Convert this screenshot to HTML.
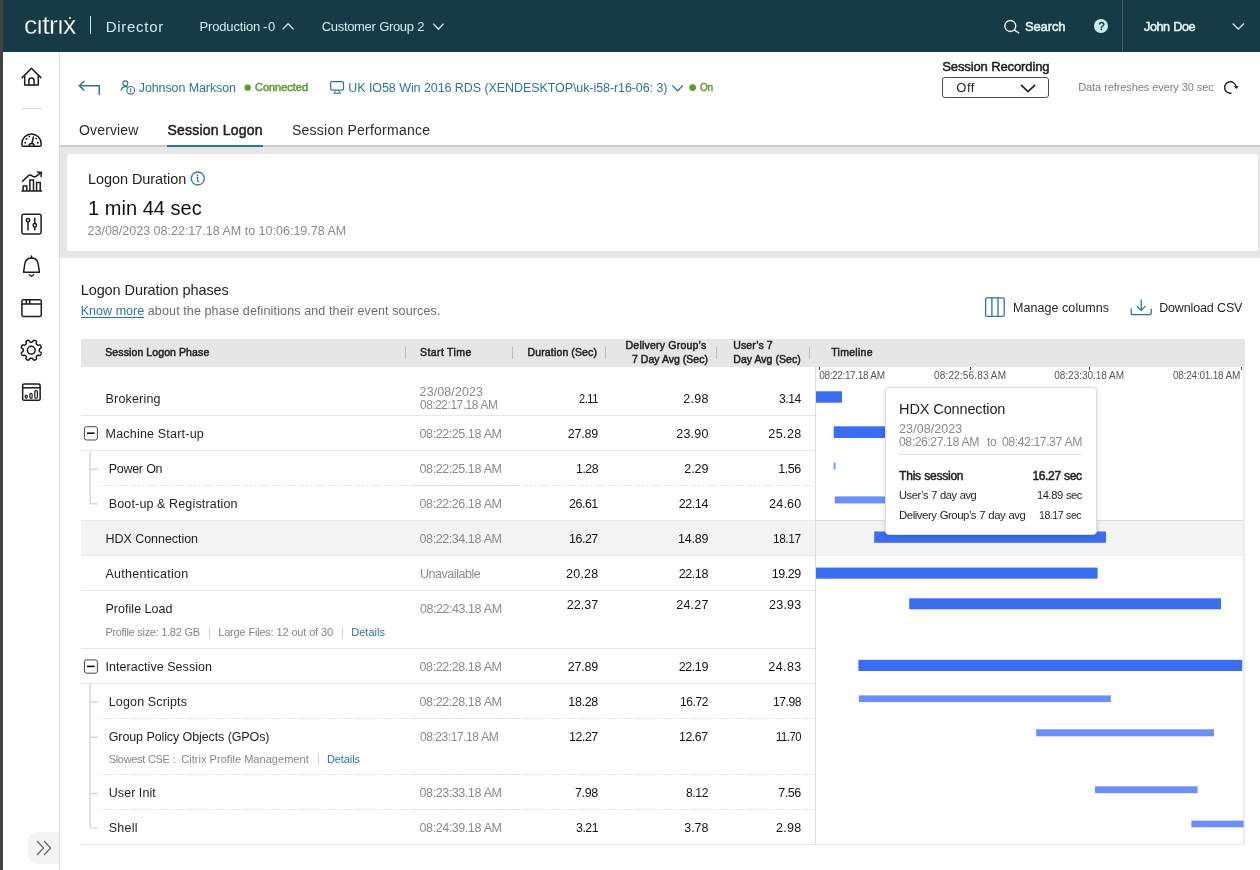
<!DOCTYPE html>
<html lang="en">
<head>
<meta charset="utf-8">
<title>Citrix Director - Session Logon</title>
<style>
html,body{margin:0;padding:0}
body{width:1260px;height:870px;position:relative;overflow:hidden;background:#fff;
 font-family:"Liberation Sans",sans-serif;color:#1f1f1f;-webkit-font-smoothing:antialiased}
.t{position:absolute;white-space:pre;line-height:1;display:block;transform-origin:0 0}
.a{position:absolute;display:block}
.b{position:absolute;display:block}
svg{position:absolute;overflow:visible}
#page{position:absolute;left:0;top:0;width:1260px;height:870px;overflow:hidden;will-change:transform}
#strip{left:0;top:0;width:3px;height:870px;background:#424242}
#hdr{left:3px;top:0;width:1257px;height:52px;background:#173a47}
#side{left:3px;top:52px;width:56px;height:818px;background:#fff;border-right:1px solid #dadada}
#band{left:60px;top:145px;width:1200px;height:113px;background:#e7e7e7;border-top:2px solid #cbcbcb;box-sizing:border-box}
#card{left:66.5px;top:153.7px;width:1191.5px;height:97.3px;background:#fff;border-radius:3px}
.hl{position:absolute;height:1px;background:#e7e7e7;left:80.5px;width:735px}
.dl{position:absolute;height:1px;left:97.9px;width:717.5px;background:repeating-linear-gradient(90deg,#dcdcdc 0,#dcdcdc 1.4px,transparent 1.4px,transparent 2.8px)}
.vs{position:absolute;width:1px;height:11.5px;top:347px;background:#b9b9b9}
.tk{position:absolute;width:1px;height:3.4px;top:366.8px;background:#444}
.tr{position:absolute;background:#d6d6d6}
.cb{position:absolute;left:83.9px;width:14px;height:14.3px;box-sizing:border-box;border:1px solid #444;border-radius:2.5px;background:#fff}
.cb:after{content:"";position:absolute;left:2.1px;width:7.6px;top:5.3px;height:1.3px;background:#111}
.sp{position:absolute;width:1px;height:10.5px;background:#d4d4d4}
#tip{left:885px;top:387px;width:211.5px;height:148px;background:#fff;border:1px solid #dedede;border-radius:4px;box-sizing:border-box;box-shadow:0 1px 4px rgba(0,0,0,.16)}
</style>
</head>
<body>
<div id="page">
<div id="strip" class="a"></div>

<!-- ===== top bar ===== -->
<header id="hdr" class="a"></header>
<i class="a" style="left:69.2px;top:16.6px;width:2.3px;height:2.3px;border-radius:50%;background:#fff;z-index:2"></i>
<i class="a" style="left:90px;top:16.2px;width:1px;height:17.8px;background:#bfe3e8"></i>
<svg style="left:281px;top:20.5px" width="14" height="10" viewBox="0 0 14 10"><path d="M1.6 8.4 L7.1 2.8 L12.6 8.4" fill="none" stroke="#d3eff1" stroke-width="1.3"/></svg>
<svg style="left:431px;top:21px" width="14" height="10" viewBox="0 0 14 10"><path d="M2.2 2.6 L7.4 8.2 L12.6 2.6" fill="none" stroke="#d3eff1" stroke-width="1.3"/></svg>
<svg style="left:1003px;top:19px" width="18" height="16" viewBox="0 0 18 16"><circle cx="7.3" cy="7" r="5.5" fill="none" stroke="#fff" stroke-width="1.3"/><path d="M11.3 10.9 L16.2 14.3" stroke="#fff" stroke-width="1.3" fill="none"/></svg>
<i class="a" style="left:1094.2px;top:19.4px;width:13.8px;height:13.8px;border-radius:50%;background:#c9eef0"></i>
<i class="a" style="left:1122px;top:0;width:1px;height:52px;background:#45636d"></i>
<svg style="left:1231px;top:21px" width="14" height="10" viewBox="0 0 14 10"><path d="M1.7 2.5 L7.3 8.1 L12.9 2.5" fill="none" stroke="#d3eff1" stroke-width="1.3"/></svg>

<span class="t" style="left:23.90px;top:12px;font-size:26.5px;letter-spacing:-0.427px;color:#fff;-webkit-text-stroke:0.3px #173a47;">citrix</span>
<span class="t" style="left:105.70px;top:19px;font-size:15px;letter-spacing:0.729px;color:#cfecf0;">Director</span>
<span class="t" style="left:199.50px;top:20px;font-size:13px;letter-spacing:-0.158px;color:#cdecee;">Production</span>
<span class="t" style="left:263.00px;top:20px;font-size:13px;color:#cdecee;">-</span>
<span class="t" style="left:268.10px;top:20px;font-size:13px;color:#cdecee;">0</span>
<span class="t" style="left:321.75px;top:20px;font-size:13px;letter-spacing:-0.322px;word-spacing:0.322px;color:#cdecee;">Customer Group 2</span>
<span class="t" style="left:1025.00px;top:20px;font-size:13px;letter-spacing:-0.138px;-webkit-text-stroke:0.5px;color:#e3f5f6;">Search</span>
<span class="t" style="left:1143.75px;top:20px;font-size:13px;letter-spacing:-0.450px;word-spacing:0.450px;transform:scaleX(0.9731);-webkit-text-stroke:0.5px;color:#e3f5f6;">John Doe</span>
<span class="t" style="left:1098.60px;top:21px;font-size:11px;-webkit-text-stroke:0.5px;color:#173a47;">?</span>
<i class="a" style="left:37px;top:13px;width:5px;height:6px;background:#173a47"></i><i class="a" style="left:58px;top:13px;width:5px;height:6px;background:#173a47"></i>

<!-- ===== side nav ===== -->
<nav id="side" class="a"></nav>
<svg style="left:19px;top:64px" width="26" height="24" viewBox="0 0 26 24" fill="none" stroke="#1c1c1c" stroke-width="1.5" stroke-linejoin="round" stroke-linecap="round">
 <path d="M3.2 13.6 L12.5 4.3 L21.8 13.6"/><path d="M5.7 12 V21 H19.3 V12"/><path d="M9.9 21 V16.6 a2.6 2.6 0 0 1 5.2 0 V21"/></svg>
<i class="a" style="left:21px;top:108px;width:21px;height:1px;background:#dcdcdc"></i>
<svg style="left:19px;top:130px" width="26" height="20" viewBox="0 0 26 20" fill="none" stroke="#1c1c1c" stroke-width="1.5" stroke-linejoin="round" stroke-linecap="round">
 <path d="M2.9 15 V13.5 a9.6 9.6 0 0 1 19.2 0 V15 Q22.1 16.3 20.8 16.3 H4.2 Q2.9 16.3 2.9 15 Z"/><path d="M12.9 13.3 L14.4 7"/><path d="M10 16.1 a2.6 2.6 0 0 1 5.2 0" stroke-width="1.3"/>
 <g fill="#1c1c1c" stroke="none"><circle cx="6.3" cy="12.7" r=".95"/><circle cx="7.6" cy="9" r=".95"/><circle cx="10.3" cy="6.6" r=".95"/><circle cx="17.2" cy="8.6" r=".95"/><circle cx="18.8" cy="12.7" r=".95"/></g></svg>
<svg style="left:19px;top:168px" width="26" height="26" viewBox="0 0 26 26" fill="none" stroke="#1c1c1c" stroke-width="1.5" stroke-linejoin="miter" stroke-linecap="butt">
 <path d="M2.3 23 H23.2"/><path d="M4.2 23 V18 H7.8 V23"/><path d="M10.9 23 V12 H14.5 V23"/><path d="M17.6 23 V14.6 H21.2 V23"/>
 <path d="M3.6 13.3 L9.6 7.4 Q11.5 6.6 13.2 8 Q15 9.6 17 8.3 L22.2 4.6" stroke-linecap="round"/><path d="M18.3 3.9 L22.4 4.4 L22.1 8.6" stroke-linecap="round" stroke-linejoin="round"/></svg>
<svg style="left:19px;top:211px" width="26" height="26" viewBox="0 0 26 26" fill="none" stroke="#1c1c1c" stroke-width="1.5">
 <rect x="2.9" y="3.3" width="19.2" height="19.6" rx="1.6"/><circle cx="9" cy="9.3" r="1.7"/><path d="M9 11 V19.5"/><path d="M15.8 6.8 V12.6 M15.8 16 V19.5"/><circle cx="15.8" cy="14.3" r="1.7"/></svg>
<svg style="left:19px;top:253px" width="26" height="26" viewBox="0 0 26 26" fill="none" stroke="#1c1c1c" stroke-width="1.5" stroke-linejoin="round" stroke-linecap="round">
 <path d="M4.6 19.2 H20.4 L19.6 13.5 C19.4 8 17 5 12.5 5 C8 5 5.6 8 5.4 13.5 Z"/><path d="M12.5 3 V5"/><path d="M10.3 21.7 L12.5 23.4 L14.7 21.7" stroke-width="1.3"/></svg>
<svg style="left:19px;top:296px" width="26" height="24" viewBox="0 0 26 24" fill="none" stroke="#1c1c1c" stroke-width="1.5">
 <rect x="2.9" y="3.7" width="19.4" height="16.7" rx="1.6"/><path d="M2.9 8 H22.3"/><path d="M7.4 3.7 V8 M10.7 3.7 V8"/></svg>
<svg style="left:19px;top:338px" width="26" height="26" viewBox="0 0 26 26" fill="none" stroke="#1c1c1c" stroke-width="1.5" stroke-linejoin="round">
 <path d="M20.30 12.20 L20.30 12.41 L20.30 12.62 L20.30 12.83 L20.33 13.05 L20.41 13.27 L20.63 13.53 L21.05 13.83 L21.59 14.19 L21.99 14.54 L22.17 14.86 L22.20 15.15 L22.16 15.42 L22.09 15.68 L22.00 15.94 L21.90 16.20 L21.79 16.45 L21.67 16.69 L21.53 16.93 L21.37 17.15 L21.14 17.33 L20.79 17.43 L20.26 17.40 L19.63 17.27 L19.11 17.19 L18.78 17.21 L18.56 17.31 L18.39 17.45 L18.24 17.59 L18.09 17.74 L17.94 17.89 L17.79 18.04 L17.64 18.19 L17.50 18.34 L17.36 18.51 L17.26 18.73 L17.24 19.06 L17.32 19.58 L17.45 20.21 L17.48 20.74 L17.38 21.09 L17.20 21.32 L16.98 21.48 L16.74 21.62 L16.50 21.74 L16.25 21.85 L15.99 21.95 L15.73 22.04 L15.47 22.11 L15.20 22.15 L14.91 22.12 L14.59 21.94 L14.24 21.54 L13.88 21.00 L13.58 20.58 L13.32 20.36 L13.10 20.28 L12.88 20.25 L12.67 20.25 L12.46 20.25 L12.25 20.25 L12.04 20.25 L11.83 20.25 L11.62 20.25 L11.40 20.28 L11.18 20.36 L10.92 20.58 L10.62 21.00 L10.26 21.54 L9.91 21.94 L9.59 22.12 L9.30 22.15 L9.03 22.11 L8.77 22.04 L8.51 21.95 L8.25 21.85 L8.00 21.74 L7.76 21.62 L7.52 21.48 L7.30 21.32 L7.12 21.09 L7.02 20.74 L7.05 20.21 L7.18 19.58 L7.26 19.06 L7.24 18.73 L7.14 18.51 L7.00 18.34 L6.86 18.19 L6.71 18.04 L6.56 17.89 L6.41 17.74 L6.26 17.59 L6.11 17.45 L5.94 17.31 L5.72 17.21 L5.39 17.19 L4.87 17.27 L4.24 17.40 L3.71 17.43 L3.36 17.33 L3.13 17.15 L2.97 16.93 L2.83 16.69 L2.71 16.45 L2.60 16.20 L2.50 15.94 L2.41 15.68 L2.34 15.42 L2.30 15.15 L2.33 14.86 L2.51 14.54 L2.91 14.19 L3.45 13.83 L3.87 13.53 L4.09 13.27 L4.17 13.05 L4.20 12.83 L4.20 12.62 L4.20 12.41 L4.20 12.20 L4.20 11.99 L4.20 11.78 L4.20 11.57 L4.17 11.35 L4.09 11.13 L3.87 10.87 L3.45 10.57 L2.91 10.21 L2.51 9.86 L2.33 9.54 L2.30 9.25 L2.34 8.98 L2.41 8.72 L2.50 8.46 L2.60 8.20 L2.71 7.95 L2.83 7.71 L2.97 7.47 L3.13 7.25 L3.36 7.07 L3.71 6.97 L4.24 7.00 L4.87 7.13 L5.39 7.21 L5.72 7.19 L5.94 7.09 L6.11 6.95 L6.26 6.81 L6.41 6.66 L6.56 6.51 L6.71 6.36 L6.86 6.21 L7.00 6.06 L7.14 5.89 L7.24 5.67 L7.26 5.34 L7.18 4.82 L7.05 4.19 L7.02 3.66 L7.12 3.31 L7.30 3.08 L7.52 2.92 L7.76 2.78 L8.00 2.66 L8.25 2.55 L8.51 2.45 L8.77 2.36 L9.03 2.29 L9.30 2.25 L9.59 2.28 L9.91 2.46 L10.26 2.86 L10.62 3.40 L10.92 3.82 L11.18 4.04 L11.40 4.12 L11.62 4.15 L11.83 4.15 L12.04 4.15 L12.25 4.15 L12.46 4.15 L12.67 4.15 L12.88 4.15 L13.10 4.12 L13.32 4.04 L13.58 3.82 L13.88 3.40 L14.24 2.86 L14.59 2.46 L14.91 2.28 L15.20 2.25 L15.47 2.29 L15.73 2.36 L15.99 2.45 L16.25 2.55 L16.50 2.66 L16.74 2.78 L16.98 2.92 L17.20 3.08 L17.38 3.31 L17.48 3.66 L17.45 4.19 L17.32 4.82 L17.24 5.34 L17.26 5.67 L17.36 5.89 L17.50 6.06 L17.64 6.21 L17.79 6.36 L17.94 6.51 L18.09 6.66 L18.24 6.81 L18.39 6.95 L18.56 7.09 L18.78 7.19 L19.11 7.21 L19.63 7.13 L20.26 7.00 L20.79 6.97 L21.14 7.07 L21.37 7.25 L21.53 7.47 L21.67 7.71 L21.79 7.95 L21.90 8.20 L22.00 8.46 L22.09 8.72 L22.16 8.98 L22.20 9.25 L22.17 9.54 L21.99 9.86 L21.59 10.21 L21.05 10.57 L20.63 10.87 L20.41 11.13 L20.33 11.35 L20.30 11.57 L20.30 11.78 L20.30 11.99 Z"/><circle cx="12.25" cy="12.2" r="3.85"/></svg>
<svg style="left:19px;top:380px" width="26" height="24" viewBox="0 0 26 24" fill="none" stroke="#1c1c1c" stroke-width="1.5">
 <rect x="3.65" y="4.05" width="17.5" height="16.3" rx="1.6"/><path d="M3.65 7.8 H21.15"/>
 <rect x="6.2" y="15.4" width="2" height="2.7" rx=".8" stroke-width="1.2"/><rect x="10.9" y="13.3" width="2.2" height="4.8" rx=".9" stroke-width="1.2"/><rect x="15.8" y="10.6" width="2.6" height="7.5" rx="1.1" stroke-width="1.2"/></svg>
<i class="a" style="left:28px;top:832px;width:31px;height:32px;background:#f3f3f3;border-radius:9px 0 0 9px"></i>
<svg style="left:34px;top:838px" width="20" height="20" viewBox="0 0 20 20" fill="none" stroke="#666" stroke-width="1.2"><path d="M3 3 L9.6 10 L3 17"/><path d="M10 3 L16.6 10 L10 17"/></svg>

<!-- ===== session bar ===== -->
<svg style="left:77px;top:78px" width="26" height="20" viewBox="0 0 26 20" fill="none" stroke="#2e7690" stroke-width="1.5" stroke-linecap="round" stroke-linejoin="round">
 <path d="M2.4 7.7 H22.3 V16.6"/><path d="M6.9 3.3 L2.4 7.7 L6.9 12.1"/></svg>
<svg style="left:119px;top:79px" width="18" height="18" viewBox="0 0 18 18" fill="none" stroke="#2e7690" stroke-width="1.1">
 <circle cx="6.3" cy="4.4" r="2.5"/><path d="M2.1 11.6 C2.6 8.6 4.2 7.6 6.3 7.6 C7.3 7.6 8.2 7.9 8.9 8.5"/><circle cx="11.7" cy="11.3" r="3.8"/><path d="M11.7 9.2 V13.4" stroke-width="1"/></svg>
<svg style="left:240px;top:80px" width="16" height="16" viewBox="0 0 16 16"><circle cx="7.65" cy="7.65" r="3.2" fill="#5b9e30"/></svg>
<svg style="left:329px;top:80px" width="18" height="16" viewBox="0 0 18 16" fill="none" stroke="#2e7690" stroke-width="1.2">
 <rect x="1.7" y="1.6" width="12.8" height="8.6" rx="1.2"/><path d="M4.3 13.2 H11.9" stroke-width="1.1"/><path d="M6.5 10.4 L5.4 13 M9.7 10.4 L10.8 13" stroke-width="1"/></svg>
<svg style="left:670px;top:82px" width="16" height="12" viewBox="0 0 16 12" fill="none" stroke="#2e7690" stroke-width="1.3"><path d="M2.2 3.4 L7.6 8.8 L13 3.4"/></svg>
<svg style="left:685px;top:80px" width="16" height="16" viewBox="0 0 16 16"><circle cx="7.65" cy="7.55" r="3.4" fill="#5b9e30"/></svg>
<i class="a" style="left:942px;top:77.4px;width:107px;height:20.2px;box-sizing:border-box;border:1px solid #4d4d4d;border-radius:3px;background:#fff"></i>
<svg style="left:1018px;top:82px" width="20" height="12" viewBox="0 0 20 12" fill="none" stroke="#1c1c1c" stroke-width="1.6"><path d="M3 2.9 L10.1 9.6 L17.2 2.9"/></svg>
<svg style="left:1221px;top:78px" width="22" height="20" viewBox="0 0 22 20" fill="none" stroke="#1c1c1c" stroke-width="1.4" stroke-linecap="round">
 <path d="M9.9 15.2 A5.7 5.7 0 1 1 14.9 8.3"/><path d="M12.9 8.2 L17.8 8.2 L15.4 10.9 Z" fill="#1c1c1c" stroke="none"/></svg>

<!-- ===== tabs / summary ===== -->
<div id="band" class="a"></div>
<i class="a" style="left:167px;top:144.8px;width:96.3px;height:2.2px;background:#2e7690"></i>
<div id="card" class="a"></div>
<svg style="left:189px;top:170px" width="18" height="18" viewBox="0 0 18 18" fill="none" stroke="#2e7690" stroke-width="1.3">
 <circle cx="8.8" cy="8.5" r="6.5"/><path d="M7.6 7.4 H8.7 V10.9 Q8.9 11.7 10.3 11.9" stroke-width="1.2"/><circle cx="8.6" cy="5.3" r=".85" fill="#2e7690" stroke="none"/></svg>
<i class="a" style="left:80.8px;top:317px;width:63.6px;height:1px;background:#2e7690"></i>
<svg style="left:983px;top:295px" width="24" height="24" viewBox="0 0 24 24" fill="none" stroke="#2e7690" stroke-width="1.3">
 <rect x="2.6" y="2.8" width="18.6" height="18.6" rx="1.5"/><path d="M8.9 2.8 V21.4 M15 2.8 V21.4"/></svg>
<svg style="left:1129px;top:297px" width="24" height="20" viewBox="0 0 24 20" fill="none" stroke="#2e7690" stroke-width="1.3" stroke-linecap="round" stroke-linejoin="round">
 <path d="M2.2 12.2 V15.4 Q2.2 17.6 4.4 17.6 H20 Q22.2 17.6 22.2 15.4 V12.2"/><path d="M12.2 3.2 V13.2"/><path d="M8.2 9.4 L12.2 13.4 L16.2 9.4"/></svg>

<span class="t" style="left:138.75px;top:82px;font-size:12.5px;letter-spacing:-0.111px;word-spacing:0.111px;color:#2e7690;">Johnson Markson</span>
<span class="t" style="left:255.00px;top:82px;font-size:11px;letter-spacing:-0.023px;-webkit-text-stroke:0.5px;color:#5b9e30;">Connected</span>
<span class="t" style="left:348.25px;top:82px;font-size:12.5px;letter-spacing:-0.083px;word-spacing:0.083px;color:#2e7690;">UK IO58 Win 2016 RDS (XENDESKTOP\uk-i58-r16-06: 3)</span>
<span class="t" style="left:700.25px;top:82px;font-size:11px;letter-spacing:-0.450px;transform:scaleX(0.9131);-webkit-text-stroke:0.5px;color:#5b9e30;">On</span>
<span class="t" style="left:942.30px;top:60px;font-size:13px;letter-spacing:-0.128px;word-spacing:0.128px;-webkit-text-stroke:0.5px;">Session Recording</span>
<span class="t" style="left:956.25px;top:81px;font-size:13px;letter-spacing:0.531px;">Off</span>
<span class="t" style="left:1078.25px;top:82px;font-size:11px;letter-spacing:-0.094px;word-spacing:0.094px;color:#7d7d7d;">Data refreshes every 30 sec</span>
<span class="t" style="left:79.00px;top:123px;font-size:14px;letter-spacing:0.152px;color:#2b2b2b;">Overview</span>
<span class="t" style="left:167.50px;top:123px;font-size:14px;letter-spacing:0.216px;word-spacing:-0.216px;-webkit-text-stroke:0.5px;">Session Logon</span>
<span class="t" style="left:292.00px;top:123px;font-size:14px;letter-spacing:0.246px;word-spacing:-0.246px;color:#2b2b2b;">Session Performance</span>
<span class="t" style="left:88.00px;top:172px;font-size:14.5px;letter-spacing:-0.078px;word-spacing:0.078px;">Logon Duration</span>
<span class="t" style="left:88.00px;top:198px;font-size:20px;letter-spacing:0.047px;word-spacing:-0.047px;color:#111;">1 min 44 sec</span>
<span class="t" style="left:87.50px;top:225px;font-size:12.5px;letter-spacing:0.005px;word-spacing:-0.005px;color:#8a8a8a;">23/08/2023 08:22:17.18 AM to 10:06:19.78 AM</span>
<span class="t" style="left:80.75px;top:283px;font-size:14.5px;letter-spacing:-0.108px;word-spacing:0.108px;">Logon Duration phases</span>
<span class="t" style="left:80.75px;top:305px;font-size:12.5px;letter-spacing:0.036px;word-spacing:-0.036px;color:#2e7690;">Know more</span>
<span class="t" style="left:147.75px;top:305px;font-size:12.5px;letter-spacing:0.146px;word-spacing:-0.146px;color:#6b6b6b;">about the phase definitions and their event sources.</span>
<span class="t" style="left:1013.00px;top:302px;font-size:12.5px;letter-spacing:0.068px;word-spacing:-0.068px;">Manage columns</span>
<span class="t" style="left:1159.20px;top:302px;font-size:12.5px;letter-spacing:-0.155px;word-spacing:0.155px;">Download CSV</span>

<!-- ===== table ===== -->
<i class="a" style="left:80.5px;top:339.2px;width:1164.3px;height:27.6px;background:#e6e6e6"></i>
<i class="vs" style="left:405px"></i><i class="vs" style="left:512px"></i><i class="vs" style="left:605px"></i><i class="vs" style="left:715.5px"></i><i class="vs" style="left:808.5px"></i>
<span class="t" style="left:105.25px;top:347px;font-size:10.5px;letter-spacing:0.113px;word-spacing:-0.113px;-webkit-text-stroke:0.5px;">Session Logon Phase</span>
<span class="t" style="left:420.00px;top:347px;font-size:10.5px;letter-spacing:0.422px;word-spacing:-0.422px;-webkit-text-stroke:0.5px;">Start Time</span>
<span class="t" style="left:527.50px;top:347px;font-size:10.5px;letter-spacing:0.151px;word-spacing:-0.151px;-webkit-text-stroke:0.5px;">Duration (Sec)</span>
<span class="t" style="left:625.50px;top:340px;font-size:10.5px;letter-spacing:0.237px;word-spacing:-0.237px;-webkit-text-stroke:0.5px;">Delivery Group’s</span>
<span class="t" style="left:632.00px;top:354px;font-size:10.5px;letter-spacing:0.028px;word-spacing:-0.028px;-webkit-text-stroke:0.5px;">7 Day Avg (Sec)</span>
<span class="t" style="left:733.25px;top:340px;font-size:10.5px;letter-spacing:0.094px;word-spacing:-0.094px;-webkit-text-stroke:0.5px;">User’s 7</span>
<span class="t" style="left:733.25px;top:354px;font-size:10.5px;letter-spacing:0.056px;word-spacing:-0.056px;-webkit-text-stroke:0.5px;">Day Avg (Sec)</span>
<span class="t" style="left:831.25px;top:347px;font-size:10.5px;letter-spacing:0.277px;-webkit-text-stroke:0.5px;">Timeline</span>
<i class="a" style="left:80.5px;top:520.5px;width:1164px;height:35px;background:#f3f3f3"></i>
<i class="hl" style="top:415px"></i><i class="hl" style="top:450px"></i><i class="hl" style="top:520px;background:#eaeaea"></i><i class="hl" style="top:520px;left:815px;width:429px;background:#dbdbdb"></i><i class="hl" style="top:555px"></i>
<i class="hl" style="top:590px"></i><i class="hl" style="top:648px"></i><i class="hl" style="top:683px"></i><i class="hl" style="top:844px;width:1164px"></i>
<i class="hl" style="top:485px;left:412.5px;width:107.5px"></i><i class="hl" style="top:718px;left:412.5px;width:107.5px"></i><i class="hl" style="top:774px;left:412.5px;width:107.5px"></i><i class="hl" style="top:809px;left:412.5px;width:107.5px"></i>
<i class="dl" style="top:485px"></i><i class="dl" style="top:718px"></i><i class="dl" style="top:774px"></i><i class="dl" style="top:809px"></i>
<i class="a" style="left:815.3px;top:366.8px;width:1px;height:478px;background:#dcdcdc"></i>
<i class="a" style="left:1243px;top:367px;width:2px;height:478px;background:#ececec"></i>
<i class="tk" style="left:819px"></i><i class="tk" style="left:970px"></i><i class="tk" style="left:1089.2px"></i><i class="tk" style="left:1240.8px"></i>
<span class="t" style="left:819.25px;top:371px;font-size:10px;letter-spacing:-0.359px;word-spacing:0.359px;color:#555;">08:22:17.18 AM</span>
<span class="t" style="left:934.00px;top:371px;font-size:10px;letter-spacing:0.161px;word-spacing:-0.161px;color:#555;">08:22:56.83 AM</span>
<span class="t" style="left:1054.30px;top:371px;font-size:10px;letter-spacing:-0.030px;word-spacing:0.030px;color:#555;">08:23:30.18 AM</span>
<span class="t" style="left:1173.00px;top:371px;font-size:10px;letter-spacing:-0.230px;word-spacing:0.230px;color:#555;">08:24:01.18 AM</span>
<svg style="left:0;top:0" width="120" height="870" viewBox="0 0 120 870" fill="none" stroke="#d7d7d7" stroke-width="1.45"><path d="M90.15 450.8 V502.2 Q90.15 503.7 91.6 503.7 H97.8 M90.15 469.3 H97.8"/><path d="M90.15 683.8 V826.6 Q90.15 828.1 91.6 828.1 H97.8 M90.15 702.2 H97.8 M90.15 737.2 H97.8 M90.15 793.4 H97.8"/></svg>
<svg style="left:0;top:0" width="120" height="700" viewBox="0 0 120 700"><rect x="84.4" y="426.7" width="13" height="13.3" rx="2.2" fill="#fff" stroke="#444" stroke-width="1"/><rect x="87" y="432.4" width="7.6" height="1.6" fill="#111"/><rect x="84.4" y="659.9" width="13" height="13.3" rx="2.2" fill="#fff" stroke="#444" stroke-width="1"/><rect x="87" y="665.6" width="7.6" height="1.6" fill="#111"/></svg>
<i class="sp" style="left:209px;top:627px"></i><i class="sp" style="left:342px;top:627px"></i><i class="sp" style="left:317.5px;top:754px"></i>
<span class="t" style="left:105.50px;top:393px;font-size:12.5px;letter-spacing:0.188px;">Brokering</span>
<span class="t" style="left:419.60px;top:386px;font-size:12.5px;letter-spacing:0.093px;color:#8a8a8a;">23/08/2023</span>
<span class="t" style="left:419.60px;top:399px;font-size:12.5px;letter-spacing:-0.450px;word-spacing:0.450px;transform:scaleX(0.9481);color:#8a8a8a;">08:22:17.18 AM</span>
<span class="t" style="left:579.00px;top:393px;font-size:12.5px;letter-spacing:-0.450px;transform:scaleX(0.8763);color:#141414;">2.11</span>
<span class="t" style="left:683.30px;top:393px;font-size:12.5px;letter-spacing:0.263px;color:#141414;">2.98</span>
<span class="t" style="left:779.00px;top:393px;font-size:12.5px;letter-spacing:-0.450px;transform:scaleX(0.9711);color:#141414;">3.14</span>
<span class="t" style="left:105.50px;top:428px;font-size:12.5px;letter-spacing:0.219px;word-spacing:-0.219px;">Machine Start-up</span>
<span class="t" style="left:419.60px;top:428px;font-size:12.5px;letter-spacing:-0.430px;word-spacing:0.430px;color:#8a8a8a;">08:22:25.18 AM</span>
<span class="t" style="left:567.70px;top:428px;font-size:12.5px;letter-spacing:-0.178px;color:#141414;">27.89</span>
<span class="t" style="left:676.30px;top:428px;font-size:12.5px;letter-spacing:0.197px;color:#141414;">23.90</span>
<span class="t" style="left:768.30px;top:428px;font-size:12.5px;letter-spacing:0.422px;color:#141414;">25.28</span>
<span class="t" style="left:108.75px;top:463px;font-size:12.5px;letter-spacing:-0.302px;word-spacing:0.302px;">Power On</span>
<span class="t" style="left:419.60px;top:463px;font-size:12.5px;letter-spacing:-0.430px;word-spacing:0.430px;color:#8a8a8a;">08:22:25.18 AM</span>
<span class="t" style="left:575.70px;top:463px;font-size:12.5px;letter-spacing:-0.450px;transform:scaleX(0.9842);color:#141414;">1.28</span>
<span class="t" style="left:684.30px;top:463px;font-size:12.5px;letter-spacing:-0.071px;color:#141414;">2.29</span>
<span class="t" style="left:778.30px;top:463px;font-size:12.5px;letter-spacing:-0.438px;color:#141414;">1.56</span>
<span class="t" style="left:108.75px;top:498px;font-size:12.5px;letter-spacing:0.158px;word-spacing:-0.158px;">Boot-up &amp; Registration</span>
<span class="t" style="left:419.60px;top:498px;font-size:12.5px;letter-spacing:-0.430px;word-spacing:0.430px;color:#8a8a8a;">08:22:26.18 AM</span>
<span class="t" style="left:569.00px;top:498px;font-size:12.5px;letter-spacing:-0.450px;transform:scaleX(0.9928);color:#141414;">26.61</span>
<span class="t" style="left:678.70px;top:498px;font-size:12.5px;letter-spacing:-0.403px;color:#141414;">22.14</span>
<span class="t" style="left:769.00px;top:498px;font-size:12.5px;letter-spacing:0.247px;color:#141414;">24.60</span>
<span class="t" style="left:105.50px;top:533px;font-size:12.5px;letter-spacing:-0.052px;word-spacing:0.052px;">HDX Connection</span>
<span class="t" style="left:419.60px;top:533px;font-size:12.5px;letter-spacing:-0.430px;word-spacing:0.430px;color:#8a8a8a;">08:22:34.18 AM</span>
<span class="t" style="left:569.00px;top:533px;font-size:12.5px;letter-spacing:-0.450px;transform:scaleX(0.9928);color:#141414;">16.27</span>
<span class="t" style="left:678.00px;top:533px;font-size:12.5px;letter-spacing:-0.228px;color:#141414;">14.89</span>
<span class="t" style="left:773.30px;top:533px;font-size:12.5px;letter-spacing:-0.450px;transform:scaleX(0.9488);color:#141414;">18.17</span>
<span class="t" style="left:105.50px;top:568px;font-size:12.5px;letter-spacing:0.269px;">Authentication</span>
<span class="t" style="left:419.60px;top:568px;font-size:12.5px;letter-spacing:-0.450px;transform:scaleX(0.9982);color:#8a8a8a;">Unavailable</span>
<span class="t" style="left:566.00px;top:568px;font-size:12.5px;letter-spacing:0.247px;color:#141414;">20.28</span>
<span class="t" style="left:678.70px;top:568px;font-size:12.5px;letter-spacing:-0.403px;color:#141414;">22.18</span>
<span class="t" style="left:771.70px;top:568px;font-size:12.5px;letter-spacing:-0.428px;color:#141414;">19.29</span>
<span class="t" style="left:105.50px;top:603px;font-size:12.5px;letter-spacing:0.031px;word-spacing:-0.031px;">Profile Load</span>
<span class="t" style="left:419.60px;top:603px;font-size:12.5px;letter-spacing:-0.450px;word-spacing:0.450px;transform:scaleX(0.9992);color:#8a8a8a;">08:22:43.18 AM</span>
<span class="t" style="left:566.70px;top:599px;font-size:12.5px;letter-spacing:0.072px;color:#141414;">22.37</span>
<span class="t" style="left:676.30px;top:599px;font-size:12.5px;letter-spacing:0.197px;color:#141414;">24.27</span>
<span class="t" style="left:769.00px;top:599px;font-size:12.5px;letter-spacing:0.247px;color:#141414;">23.93</span>
<span class="t" style="left:105.50px;top:661px;font-size:12.5px;letter-spacing:0.051px;word-spacing:-0.051px;">Interactive Session</span>
<span class="t" style="left:419.60px;top:661px;font-size:12.5px;letter-spacing:-0.430px;word-spacing:0.430px;color:#8a8a8a;">08:22:28.18 AM</span>
<span class="t" style="left:567.70px;top:661px;font-size:12.5px;letter-spacing:-0.178px;color:#141414;">27.89</span>
<span class="t" style="left:678.70px;top:661px;font-size:12.5px;letter-spacing:-0.403px;color:#141414;">22.19</span>
<span class="t" style="left:768.30px;top:661px;font-size:12.5px;letter-spacing:0.422px;color:#141414;">24.83</span>
<span class="t" style="left:108.75px;top:696px;font-size:12.5px;letter-spacing:0.165px;word-spacing:-0.165px;">Logon Scripts</span>
<span class="t" style="left:419.60px;top:696px;font-size:12.5px;letter-spacing:-0.430px;word-spacing:0.430px;color:#8a8a8a;">08:22:28.18 AM</span>
<span class="t" style="left:568.30px;top:696px;font-size:12.5px;letter-spacing:-0.328px;color:#141414;">18.28</span>
<span class="t" style="left:680.00px;top:696px;font-size:12.5px;letter-spacing:-0.450px;transform:scaleX(0.9623);color:#141414;">16.72</span>
<span class="t" style="left:772.70px;top:696px;font-size:12.5px;letter-spacing:-0.450px;transform:scaleX(0.9691);color:#141414;">17.98</span>
<span class="t" style="left:108.75px;top:731px;font-size:12.5px;letter-spacing:-0.109px;word-spacing:0.109px;">Group Policy Objects (GPOs)</span>
<span class="t" style="left:419.60px;top:731px;font-size:12.5px;letter-spacing:-0.450px;word-spacing:0.450px;transform:scaleX(0.9579);color:#8a8a8a;">08:23:17.18 AM</span>
<span class="t" style="left:569.00px;top:731px;font-size:12.5px;letter-spacing:-0.450px;transform:scaleX(0.9928);color:#141414;">12.27</span>
<span class="t" style="left:679.30px;top:731px;font-size:12.5px;letter-spacing:-0.450px;transform:scaleX(0.9860);color:#141414;">12.67</span>
<span class="t" style="left:775.70px;top:731px;font-size:12.5px;letter-spacing:-0.450px;transform:scaleX(0.8959);color:#141414;">11.70</span>
<span class="t" style="left:108.75px;top:787px;font-size:12.5px;letter-spacing:0.062px;word-spacing:-0.062px;">User Init</span>
<span class="t" style="left:419.60px;top:787px;font-size:12.5px;letter-spacing:-0.430px;word-spacing:0.430px;color:#8a8a8a;">08:23:33.18 AM</span>
<span class="t" style="left:575.00px;top:787px;font-size:12.5px;letter-spacing:-0.338px;color:#141414;">7.98</span>
<span class="t" style="left:686.00px;top:787px;font-size:12.5px;letter-spacing:-0.450px;transform:scaleX(0.9755);color:#141414;">8.12</span>
<span class="t" style="left:778.30px;top:787px;font-size:12.5px;letter-spacing:-0.438px;color:#141414;">7.56</span>
<span class="t" style="left:108.75px;top:822px;font-size:12.5px;letter-spacing:0.234px;">Shell</span>
<span class="t" style="left:419.60px;top:822px;font-size:12.5px;letter-spacing:-0.430px;word-spacing:0.430px;color:#8a8a8a;">08:24:39.18 AM</span>
<span class="t" style="left:575.70px;top:822px;font-size:12.5px;letter-spacing:-0.450px;transform:scaleX(0.9842);color:#141414;">3.21</span>
<span class="t" style="left:684.30px;top:822px;font-size:12.5px;letter-spacing:-0.071px;color:#141414;">3.78</span>
<span class="t" style="left:776.00px;top:822px;font-size:12.5px;letter-spacing:0.329px;color:#141414;">2.98</span>
<span class="t" style="left:105.50px;top:627px;font-size:11px;letter-spacing:-0.338px;word-spacing:0.338px;color:#858585;">Profile size: 1.82 GB</span>
<span class="t" style="left:218.25px;top:627px;font-size:11px;letter-spacing:-0.204px;word-spacing:0.204px;color:#858585;">Large Files: 12 out of 30</span>
<span class="t" style="left:351.25px;top:627px;font-size:11px;letter-spacing:0.021px;color:#2e7690;">Details</span>
<span class="t" style="left:108.75px;top:754px;font-size:11px;letter-spacing:-0.331px;word-spacing:0.331px;color:#858585;">Slowest CSE :</span>
<span class="t" style="left:181.25px;top:754px;font-size:11px;letter-spacing:0.043px;word-spacing:-0.043px;color:#858585;">Citrix Profile Management</span>
<span class="t" style="left:327.00px;top:754px;font-size:11px;letter-spacing:-0.104px;color:#2e7690;">Details</span>
<svg style="left:0;top:0" width="1260" height="870" viewBox="0 0 1260 870"><rect x="816" y="391.3" width="26.0" height="11.4" fill="#3b6df0"/><rect x="833.7" y="426.3" width="66.3" height="11.7" fill="#3b6df0"/><rect x="833.7" y="462.5" width="1.8" height="6.8" fill="#6b8ff6"/><rect x="834.7" y="496.4" width="65.3" height="7.0" fill="#6b8ff6"/><rect x="874.2" y="531.5" width="231.8" height="11.3" fill="#3b6df0"/><rect x="816" y="567.6" width="281.6" height="11.1" fill="#3b6df0"/><rect x="909.2" y="598.3" width="311.8" height="11.0" fill="#3b6df0"/><rect x="858.4" y="659.8" width="383.8" height="11.2" fill="#3b6df0"/><rect x="858.8" y="695.4" width="252.0" height="6.7" fill="#6b8ff6"/><rect x="1036.2" y="729.3" width="177.8" height="7.0" fill="#6b8ff6"/><rect x="1095" y="786.3" width="102.6" height="6.9" fill="#6b8ff6"/><rect x="1191.4" y="820.6" width="52.2" height="6.7" fill="#6b8ff6"/></svg>

<!-- ===== tooltip ===== -->
<div id="tip" class="a"></div>
<i class="a" style="left:899px;top:454px;width:183px;height:1px;background:#dedede"></i>
<span class="t" style="left:899.10px;top:402px;font-size:14.5px;letter-spacing:-0.142px;word-spacing:0.142px;">HDX Connection</span>
<span class="t" style="left:899.10px;top:423px;font-size:12.5px;letter-spacing:0.071px;color:#8a8a8a;">23/08/2023</span>
<span class="t" style="left:899.10px;top:436px;font-size:12.5px;letter-spacing:-0.450px;word-spacing:0.450px;transform:scaleX(0.9785);color:#8a8a8a;">08:26:27.18 AM</span>
<span class="t" style="left:986.50px;top:436px;font-size:12.5px;letter-spacing:-0.450px;transform:scaleX(0.9512);color:#8a8a8a;">to</span>
<span class="t" style="left:1001.50px;top:436px;font-size:12.5px;letter-spacing:-0.450px;word-spacing:0.450px;transform:scaleX(0.9798);color:#8a8a8a;">08:42:17.37 AM</span>
<span class="t" style="left:899.10px;top:470px;font-size:12px;letter-spacing:-0.229px;word-spacing:0.229px;-webkit-text-stroke:0.5px;">This session</span>
<span class="t" style="left:1032.50px;top:470px;font-size:12px;letter-spacing:-0.366px;word-spacing:0.366px;-webkit-text-stroke:0.5px;">16.27 sec</span>
<span class="t" style="left:899.10px;top:490px;font-size:11.5px;letter-spacing:-0.450px;word-spacing:0.450px;transform:scaleX(0.9655);">User’s 7 day avg</span>
<span class="t" style="left:1036.60px;top:490px;font-size:11.5px;letter-spacing:-0.450px;word-spacing:0.450px;transform:scaleX(0.9716);">14.89 sec</span>
<span class="t" style="left:899.10px;top:510px;font-size:11.5px;letter-spacing:-0.450px;word-spacing:0.450px;transform:scaleX(0.9881);">Delivery Group’s 7 day avg</span>
<span class="t" style="left:1039.40px;top:510px;font-size:11.5px;letter-spacing:-0.450px;word-spacing:0.450px;transform:scaleX(0.9117);">18.17 sec</span>
</div>
</body>
</html>
